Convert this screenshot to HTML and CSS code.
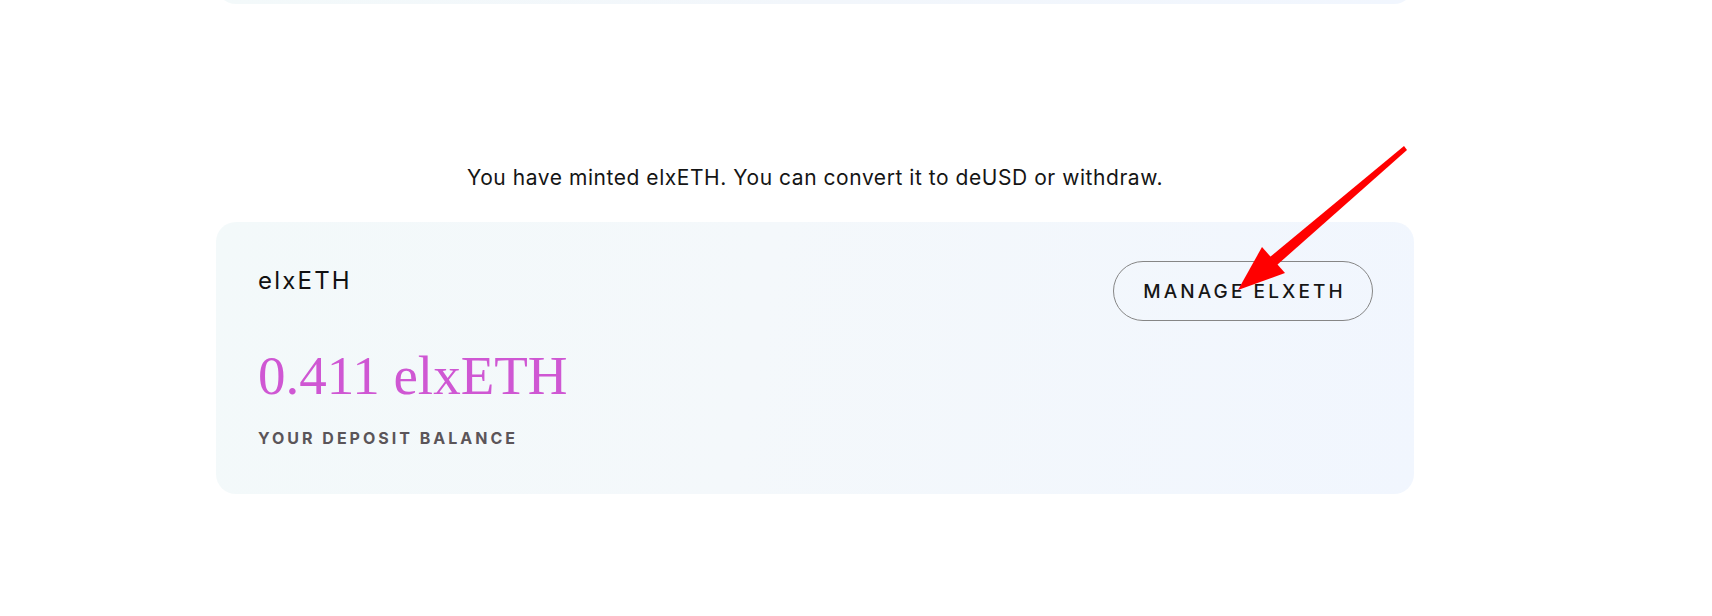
FILE: index.html
```html
<!DOCTYPE html>
<html lang="en">
<head>
<meta charset="utf-8">
<title>elxETH</title>
<link rel="stylesheet" href="styles.css">
</head>
<body>
<main class="page">
  <div class="prev-card"></div>
  <p class="notice">You have minted elxETH. You can convert it to deUSD or withdraw.</p>
  <section class="card">
    <div class="card-head">
      <h2 class="card-title">elxETH</h2>
      <button class="manage-btn" type="button">MANAGE ELXETH</button>
    </div>
    <div class="amount">0.411 elxETH</div>
    <div class="label">YOUR DEPOSIT BALANCE</div>
  </section>
</main>
<svg class="annotation" width="1712" height="616" viewBox="0 0 1712 616" xmlns="http://www.w3.org/2000/svg">
  <polygon fill="#ff0000" points="1404,146 1407,150 1277,265 1270,257"/>
  <polygon fill="#ff0000" points="1262,247 1285,273 1238,290"/>
</svg>
</body>
</html>
```
FILE: styles.css
```css
html, body {
  margin: 0;
  padding: 0;
  background: #ffffff;
}
body {
  width: 1712px;
  height: 616px;
  overflow: hidden;
  position: relative;
  font-family: Inter, "Liberation Sans", sans-serif;
  color: #141414;
}
.page {
  width: 1198px;
  margin-left: 216px;
  display: flex;
  flex-direction: column;
}
.prev-card {
  height: 40px;
  margin-top: -36px;
  border-radius: 20px;
  background: linear-gradient(90deg, #f3f9fa 0%, #f2f6fb 50%, #f1f6fe 100%);
}
.notice {
  margin: 160px 0 0;
  font-size: 21px;
  line-height: 28px;
  text-align: center;
  color: #151515;
  letter-spacing: 0.55px;
}
.card {
  margin-top: 30px;
  border-radius: 20px;
  background: linear-gradient(100deg, #f3f9fa 0%, #f4f8fb 45%, #f1f6fe 100%);
  padding: 39px 41px 46px 42px;
  display: flex;
  flex-direction: column;
}
.card-head {
  display: flex;
  justify-content: space-between;
  align-items: flex-start;
}
.card-title {
  margin: 5px 0 0;
  font-size: 24px;
  line-height: 30px;
  font-weight: 400;
  letter-spacing: 2.2px;
  color: #111111;
}
.manage-btn {
  width: 260px;
  height: 60px;
  border: 1.5px solid #868686;
  border-radius: 30px;
  background: transparent;
  font-family: Inter, "Liberation Sans", sans-serif;
  font-size: 19px;
  font-weight: 500;
  letter-spacing: 3.1px;
  color: #161616;
  padding: 0 0 0 3px;
}
.amount {
  margin-top: 25px;
  font-family: "Liberation Serif", serif;
  font-size: 55px;
  line-height: 60px;
  color: #cf57d3;
}
.label {
  margin-top: 22px;
  font-size: 16px;
  line-height: 20px;
  font-weight: 700;
  letter-spacing: 3px;
  color: #5b5559;
}
.annotation {
  position: absolute;
  left: 0;
  top: 0;
  pointer-events: none;
}
```
